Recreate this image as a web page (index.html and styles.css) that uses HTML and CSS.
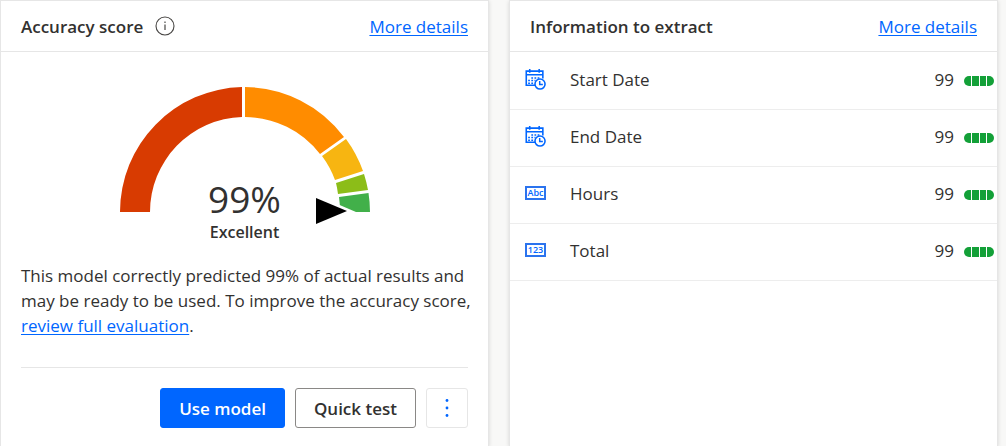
FILE: index.html
```html
<!DOCTYPE html>
<html lang="en">
<head>
<meta charset="utf-8">
<meta name="viewport" content="width=device-width, initial-scale=1">
<title>Model details</title>
<link rel="stylesheet" href="styles.css">
</head>
<body>
<svg class="sprite" aria-hidden="true">
  <symbol id="calendar" viewBox="0 0 20 20">
    <path d="M10 15.500H1.200V2H17V9M1 5.500H17M4.500 0V3.500M13.500 0V3.500" fill="none" stroke="currentColor" stroke-width="1.500"/>
    <path d="M6 8.500h1.700M9 8.500h1.700M12 8.500h1.700M3 11h1.700M6 11h1.700M9 11h1M3 13.500h1.700M6 13.500h1.700" stroke="currentColor" stroke-width="1.500"/>
    <circle cx="14.300" cy="14.300" r="4.800" fill="#fff" stroke="currentColor" stroke-width="1.500"/>
    <path d="M14 11.500V14.800H17" fill="none" stroke="currentColor" stroke-width="1.400"/>
  </symbol>
</svg>
<main class="board">
  <section class="card">
    <header class="card-head">
      <h2 class="title">Accuracy score</h2>
      <button class="info" type="button" aria-label="About the accuracy score">
        <svg width="20" height="20" viewBox="0 0 20 20"><circle cx="10" cy="10" r="9" fill="none" stroke="#484644" stroke-width="1.100"/><path d="M10 8.500V14M10 5.600V7" stroke="#484644" stroke-width="1.200"/></svg>
      </button>
      <a class="link more" href="#">More details</a>
    </header>
    <div class="score">
      <div class="gauge">
        <svg class="dial" viewBox="0 0 250 138" aria-hidden="true">
          <path fill="#d83b01" d="M0 125A125 125 0 0 1 122 0V30A95 95 0 0 0 30 125Z"/>
          <path fill="#ff8c00" d="M125 0A125 125 0 0 1 224 50L200 67A95 95 0 0 0 125 30Z"/>
          <path fill="#f7b511" d="M226 52A125 125 0 0 1 243 84L215 93A95 95 0 0 0 202 69Z"/>
          <path fill="#8cbd18" d="M244 87A125 125 0 0 1 248 103L218 107A95 95 0 0 0 216 96Z"/>
          <path fill="#42b04a" d="M248.500 106A125 125 0 0 1 250 125H220A95 95 0 0 0 219 110Z"/>
          <path fill="#fff" d="M194 107L236 125L194 142Z"/>
          <path d="M196 111L227 124L196 137Z"/>
        </svg>
        <div class="reading">
          <div class="value">99%</div>
          <div class="grade">Excellent</div>
        </div>
      </div>
      <p class="summary">This model correctly predicted 99% of actual results and may be ready to be used. To improve the accuracy score, <a class="link" href="#">review full evaluation</a>.</p>
      <div class="actions">
        <button class="btn primary" type="button">Use model</button>
        <button class="btn" type="button">Quick test</button>
        <button class="btn menu" type="button" aria-label="More options">
          <svg width="4" height="20" viewBox="0 0 4 20" fill="#0066ff"><circle cx="2" cy="2.500" r="1.400"/><circle cx="2" cy="10" r="1.400"/><circle cx="2" cy="17.500" r="1.400"/></svg>
        </button>
      </div>
    </div>
  </section>
  <section class="card">
    <header class="card-head">
      <h2 class="title">Information to extract</h2>
      <a class="link more" href="#">More details</a>
    </header>
    <ul class="fields">
      <li class="field">
        <svg class="icon"><use href="#calendar"/></svg>
        <span class="name">Start Date</span><span class="num">99</span>
        <span class="meter"><i></i><i></i><i></i><i></i></span>
      </li>
      <li class="field">
        <svg class="icon"><use href="#calendar"/></svg>
        <span class="name">End Date</span><span class="num">99</span>
        <span class="meter"><i></i><i></i><i></i><i></i></span>
      </li>
      <li class="field">
        <span class="icon tag">Abc</span>
        <span class="name">Hours</span><span class="num">99</span>
        <span class="meter"><i></i><i></i><i></i><i></i></span>
      </li>
      <li class="field">
        <span class="icon tag">123</span>
        <span class="name">Total</span><span class="num">99</span>
        <span class="meter"><i></i><i></i><i></i><i></i></span>
      </li>
    </ul>
  </section>
</main>
</body>
</html>
```
FILE: styles.css
```css
* { box-sizing: border-box; }
body {
  margin: 0;
  background: #f8f8f7;
  color: #323130;
  font: 17px/25px "Segoe UI", "Open Sans", "Noto Sans", sans-serif;
}
.sprite { position: absolute; width: 0; height: 0; }
.board {
  display: grid;
  grid-template-columns: 1fr 1fr;
  gap: 20px;
  min-height: 100vh;
  padding-right: 8px;
}
.card {
  background: #fff;
  border: 1px solid #e6e6e6;
  border-bottom: 0;
  box-shadow: 0 1px 4px rgba(0, 0, 0, .14);
}
.card-head {
  display: flex;
  align-items: center;
  height: 51px;
  padding: 0 20px;
  border-bottom: 1px solid #e6e6e6;
}
.title { margin: 0; font-size: 17px; font-weight: 600; line-height: 25px; }
.link { color: #0066ff; text-decoration: underline; text-underline-offset: 2px; }
.more { margin-left: auto; }
.info {
  display: flex;
  margin-left: 12px;
  padding: 0;
  border: 0;
  background: none;
}
.score { padding: 35px 10px 18px 20px; }
.gauge {
  display: grid;
  justify-items: center;
  height: 164px;
  margin-right: 10px;
}
.dial { grid-area: 1 / 1; width: 250px; height: 138px; overflow: visible; }
.reading { grid-area: 1 / 1; padding-top: 90px; text-align: center; }
.value { font-size: 37px; font-weight: 400; line-height: 44px; }
.grade { font-size: 16px; font-weight: 600; line-height: 22px; }
.summary { margin: 12px 0 29px; }
.actions {
  display: flex;
  justify-content: flex-end;
  gap: 10px;
  margin-right: 10px;
  padding-top: 20px;
  border-top: 1px solid #e6e6e6;
}
.btn {
  display: flex;
  align-items: center;
  justify-content: center;
  height: 40px;
  padding: 0 18px;
  border: 1px solid #8a8886;
  border-radius: 3px;
  background: #fff;
  color: #323130;
  font: inherit;
  font-weight: 600;
}
.primary { border-color: #0066ff; background: #0066ff; color: #fff; }
.menu { width: 42px; padding: 0; border-color: #e6e6e6; }
.fields { margin: 0; padding: 1px 0 0; list-style: none; }
.field {
  display: flex;
  align-items: center;
  height: 57px;
  padding: 0 3px 4px 15px;
  border-bottom: 1px solid #ededed;
}
.icon { width: 21px; height: 21px; margin-right: 24px; color: #0066ff; }
.tag {
  height: 14px;
  border: 2px solid #2b73ee;
  font: 600 9px/10px "Open Sans", sans-serif;
  text-align: center;
}
.name { flex: 1; }
.num { margin-right: 10px; font-size: 17px; }
.meter {
  display: flex;
  gap: 1px;
  width: 30px;
  height: 10px;
  margin-top: 3px;
  border-radius: 5px;
  overflow: hidden;
}
.meter i { flex: 1; background: #13a038; }
```
